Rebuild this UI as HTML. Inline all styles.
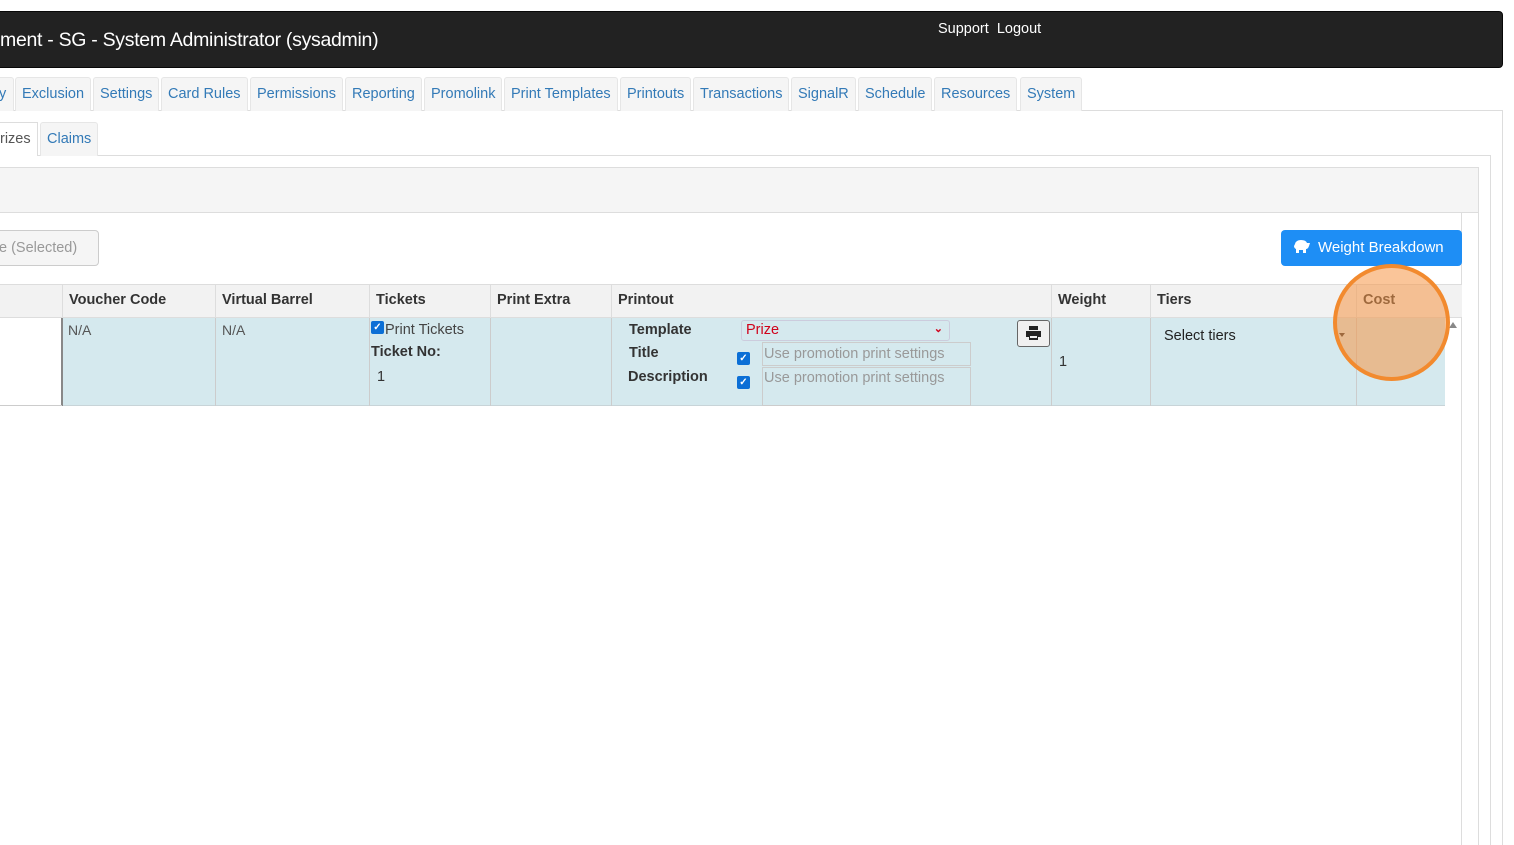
<!DOCTYPE html>
<html><head><style>
*{box-sizing:border-box;margin:0;padding:0}
body{width:1514px;height:845px;overflow:hidden;background:#fff;font-family:"Liberation Sans",Arial,sans-serif;position:relative;color:#333}
.a{position:absolute}
.hdr{left:-10px;top:11px;width:1513px;height:57px;background:#222;border:1px solid #080808;border-radius:4px}
.tab{position:absolute;top:77px;height:34px;background:#f5f5f5;border:1px solid #e6e6e6;border-bottom:none;color:#337ab7;font-size:14.5px;line-height:32px;padding:0 6px;border-radius:3px 3px 0 0}
.th{position:absolute;top:284px;height:34px;font-weight:bold;font-size:14.5px;line-height:32px;padding-left:6px;color:#333;border-left:1px solid #ddd}
.vl{position:absolute;width:1px;background:#ddd}
.cell{position:absolute;top:318px;height:88px;border-left:1px solid #ccc}
.cb{position:absolute;width:13px;height:13px;background:#0b6fd6;border-radius:2px;color:#fff;font-size:10px;line-height:13px;text-align:center;font-weight:bold}
</style></head><body>
<div class="a hdr"></div>
<div class="a" style="left:0;top:29px;color:#fff;font-size:19.5px;letter-spacing:-0.3px">ment - SG - System Administrator (sysadmin)</div>
<div class="a" style="left:938px;top:21px;color:#fff;font-size:14.5px">Support&nbsp; Logout</div>

<div class="a" style="left:0;top:110px;width:1503px;height:1px;background:#ddd"></div>
<div class="vl" style="left:1502px;top:110px;height:735px"></div>
<div class="tab" style="left:-8px;width:22px">y</div>
<div class="tab" style="left:15px">Exclusion</div>
<div class="tab" style="left:93px">Settings</div>
<div class="tab" style="left:161px">Card Rules</div>
<div class="tab" style="left:250px">Permissions</div>
<div class="tab" style="left:345px">Reporting</div>
<div class="tab" style="left:424px">Promolink</div>
<div class="tab" style="left:504px">Print Templates</div>
<div class="tab" style="left:620px">Printouts</div>
<div class="tab" style="left:693px">Transactions</div>
<div class="tab" style="left:791px">SignalR</div>
<div class="tab" style="left:858px">Schedule</div>
<div class="tab" style="left:934px">Resources</div>
<div class="tab" style="left:1020px">System</div>

<div class="a" style="left:0;top:155px;width:1491px;height:1px;background:#ddd"></div>
<div class="vl" style="left:1490px;top:155px;height:690px"></div>
<div class="a" style="left:-5px;top:122px;width:43px;height:34px;background:#fff;border:1px solid #ddd;border-bottom:none;font-size:14.5px;line-height:32px;padding-left:4px;color:#555">rizes</div>
<div class="tab" style="left:40px;top:122px;">Claims</div>

<div class="a" style="left:-2px;top:167px;width:1481px;height:46px;background:#f5f5f5;border:1px solid #ddd"></div>
<div class="vl" style="left:1478px;top:167px;height:678px"></div>
<div class="vl" style="left:1461px;top:212px;height:633px"></div>

<div class="a" style="left:-8px;top:230px;width:107px;height:36px;border:1px solid #ccc;border-radius:4px;background:#f5f5f5;color:#999;font-size:14.5px;line-height:34px;padding-left:6px">e (Selected)</div>
<div class="a" style="left:1281px;top:230px;width:181px;height:36px;border-radius:4px;background:#1e8ef5;color:#fff;font-size:15px;line-height:35px;padding-left:37px">Weight Breakdown</div>
<svg class="a" style="left:1292px;top:239px" width="19" height="15" viewBox="0 0 19 15"><path d="M3 5 Q4 1 9 1 Q14 1 15 4 L18 4 L17 7 Q16 10 14 10 L14 14 L11 14 L11 11 L7 11 L7 14 L4 14 L4 10 Q2 9 2 7 Z" fill="#fff"/></svg>

<div class="a" style="left:0;top:284px;width:1462px;height:34px;background:#f2f2f2;border-top:1px solid #ddd;border-bottom:1px solid #ddd"></div>
<div class="th" style="left:62px">Voucher Code</div>
<div class="th" style="left:215px">Virtual Barrel</div>
<div class="th" style="left:369px">Tickets</div>
<div class="th" style="left:490px">Print Extra</div>
<div class="th" style="left:611px">Printout</div>
<div class="th" style="left:1051px">Weight</div>
<div class="th" style="left:1150px">Tiers</div>
<div class="th" style="left:1356px">Cost</div>

<div class="a" style="left:62px;top:318px;width:1383px;height:88px;background:#d5e9ee;border-bottom:1px solid #c8d4d8"></div>
<div class="a" style="left:61px;top:318px;width:2px;height:88px;background:#888"></div>
<div class="a" style="left:0;top:405px;width:62px;height:1px;background:#ccc"></div>
<div class="cell" style="left:215px"></div><div class="cell" style="left:369px"></div><div class="cell" style="left:490px"></div><div class="cell" style="left:611px"></div><div class="cell" style="left:1051px"></div><div class="cell" style="left:1150px"></div><div class="cell" style="left:1356px"></div>
<div class="a" style="left:68px;top:322px;font-size:14px;color:#555">N/A</div>
<div class="a" style="left:222px;top:322px;font-size:14px;color:#555">N/A</div>
<div class="cb" style="left:371px;top:321px">✓</div>
<div class="a" style="left:385px;top:322px;font-size:14.5px;color:#444">Print Tickets</div>
<div class="a" style="left:371px;top:344px;font-size:14.5px;font-weight:bold;color:#333">Ticket No:</div>
<div class="a" style="left:377px;top:369px;font-size:14.5px;color:#333">1</div>

<div class="a" style="left:629px;top:322px;font-size:14.5px;font-weight:bold">Template</div>
<div class="a" style="left:629px;top:345px;font-size:14.5px;font-weight:bold">Title</div>
<div class="a" style="left:628px;top:369px;font-size:14.5px;font-weight:bold">Description</div>
<div class="a" style="left:741px;top:320px;width:209px;height:21px;border:1px solid #ccd;border-radius:3px;background:#d5e9ee;color:#d0021b;font-size:14.5px;line-height:19px;padding-left:4px">Prize<span style="position:absolute;right:6px;top:-1px;font-size:11px;font-weight:bold">⌄</span></div>
<div class="cb" style="left:737px;top:352px">✓</div>
<div class="cb" style="left:737px;top:376px">✓</div>
<div class="a" style="left:762px;top:342px;width:209px;height:24px;border:1px solid #ccc;color:#999;font-size:14.5px;line-height:22px;padding-left:1px">Use promotion print settings</div>
<div class="a" style="left:762px;top:367px;width:209px;height:39px;border:1px solid #ccc;color:#999;font-size:14.5px;line-height:20px;padding-left:1px">Use promotion print settings</div>
<div class="a" style="left:1017px;top:320px;width:33px;height:27px;border:1px solid #666;border-radius:3px;background:#f0f0f0"></div>
<svg class="a" style="left:1026px;top:326px" width="15" height="14" viewBox="0 0 15 14"><rect x="3" y="0" width="9" height="4" fill="#222"/><rect x="0" y="5" width="15" height="6" fill="#222"/><rect x="3" y="9" width="9" height="5" fill="#222"/><rect x="4" y="10" width="7" height="2" fill="#eee"/></svg>
<div class="a" style="left:1059px;top:354px;font-size:14.5px">1</div>
<div class="a" style="left:1164px;top:328px;font-size:14.5px;color:#222">Select tiers</div>
<div class="a" style="left:1339px;top:333px;border-left:3px solid transparent;border-right:3px solid transparent;border-top:4px solid #333"></div>
<div class="a" style="left:1449px;top:322px;border-left:4px solid transparent;border-right:4px solid transparent;border-bottom:6px solid #888"></div>

<div class="a" style="left:1333px;top:264px;width:117px;height:117px;border-radius:50%;background:rgba(245,150,70,0.55);border:4px solid #f28a2e"></div>
</body></html>
